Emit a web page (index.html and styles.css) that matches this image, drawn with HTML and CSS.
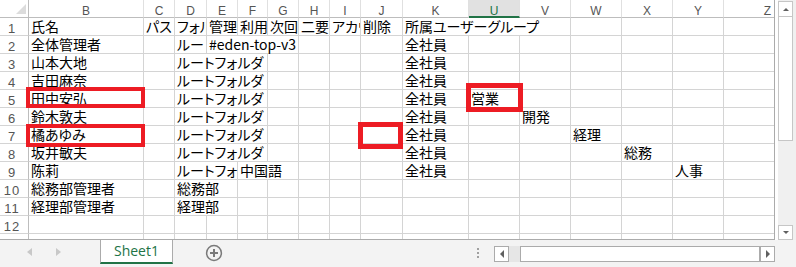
FILE: index.html
```html
<!DOCTYPE html>
<html lang="ja">
<head>
  <meta charset="UTF-8">
  <title>Sheet1</title>
  <link rel="stylesheet" href="styles.css">
</head>
<body>
<div class="app">
  <div class="top">
    <div class="sheet">
      <div class="grid">
        <div class="corner"><span class="tri-corner"></span></div>
        <div class="hd">B</div><div class="hd">C</div><div class="hd">D</div><div class="hd">E</div><div class="hd">F</div><div class="hd">G</div><div class="hd">H</div><div class="hd">I</div><div class="hd">J</div><div class="hd">K</div><div class="hd sel">U</div><div class="hd">V</div><div class="hd">W</div><div class="hd">X</div><div class="hd">Y</div><div class="hd last">Z</div>

        <div class="rn">1</div>
        <div class="c">氏名</div><div class="c">パス</div><div class="c clip">フォル</div><div class="c">管理</div><div class="c">利用</div><div class="c">次回</div><div class="c">二要</div><div class="c clip">アカウ</div><div class="c">削除</div><div class="c s3">所属ユーザーグループ</div><div class="c"></div><div class="c"></div><div class="c"></div><div class="c"></div>

        <div class="rn">2</div>
        <div class="c">全体管理者</div><div class="c"></div><div class="c">ルー</div><div class="c s3">#eden-top-v3</div><div class="c"></div><div class="c"></div><div class="c"></div><div class="c">全社員</div><div class="c"></div><div class="c"></div><div class="c"></div><div class="c"></div><div class="c"></div><div class="c"></div>

        <div class="rn">3</div>
        <div class="c">山本大地</div><div class="c"></div><div class="c s3">ルートフォルダ</div><div class="c"></div><div class="c"></div><div class="c"></div><div class="c"></div><div class="c">全社員</div><div class="c"></div><div class="c"></div><div class="c"></div><div class="c"></div><div class="c"></div><div class="c"></div>

        <div class="rn">4</div>
        <div class="c">吉田麻奈</div><div class="c"></div><div class="c s3">ルートフォルダ</div><div class="c"></div><div class="c"></div><div class="c"></div><div class="c"></div><div class="c">全社員</div><div class="c"></div><div class="c"></div><div class="c"></div><div class="c"></div><div class="c"></div><div class="c"></div>

        <div class="rn">5</div>
        <div class="c">田中安弘</div><div class="c"></div><div class="c s3">ルートフォルダ</div><div class="c"></div><div class="c"></div><div class="c"></div><div class="c"></div><div class="c">全社員</div><div class="c">営業</div><div class="c"></div><div class="c"></div><div class="c"></div><div class="c"></div><div class="c"></div>

        <div class="rn">6</div>
        <div class="c">鈴木敦夫</div><div class="c"></div><div class="c s3">ルートフォルダ</div><div class="c"></div><div class="c"></div><div class="c"></div><div class="c"></div><div class="c">全社員</div><div class="c"></div><div class="c">開発</div><div class="c"></div><div class="c"></div><div class="c"></div><div class="c"></div>

        <div class="rn">7</div>
        <div class="c">橘あゆみ</div><div class="c"></div><div class="c s3">ルートフォルダ</div><div class="c"></div><div class="c"></div><div class="c"></div><div class="c"></div><div class="c">全社員</div><div class="c"></div><div class="c"></div><div class="c">経理</div><div class="c"></div><div class="c"></div><div class="c"></div>

        <div class="rn">8</div>
        <div class="c">坂井敏夫</div><div class="c"></div><div class="c s3">ルートフォルダ</div><div class="c"></div><div class="c"></div><div class="c"></div><div class="c"></div><div class="c">全社員</div><div class="c"></div><div class="c"></div><div class="c"></div><div class="c">総務</div><div class="c"></div><div class="c"></div>

        <div class="rn">9</div>
        <div class="c">陈莉</div><div class="c"></div><div class="c s2">ルートフォ</div><div class="c s2">中国語</div><div class="c"></div><div class="c"></div><div class="c"></div><div class="c">全社員</div><div class="c"></div><div class="c"></div><div class="c"></div><div class="c"></div><div class="c">人事</div><div class="c"></div>

        <div class="rn">10</div>
        <div class="c">総務部管理者</div><div class="c"></div><div class="c s2">総務部</div><div class="c"></div><div class="c"></div><div class="c"></div><div class="c"></div><div class="c"></div><div class="c"></div><div class="c"></div><div class="c"></div><div class="c"></div><div class="c"></div><div class="c"></div><div class="c"></div>

        <div class="rn">11</div>
        <div class="c">経理部管理者</div><div class="c"></div><div class="c s2">経理部</div><div class="c"></div><div class="c"></div><div class="c"></div><div class="c"></div><div class="c"></div><div class="c"></div><div class="c"></div><div class="c"></div><div class="c"></div><div class="c"></div><div class="c"></div><div class="c"></div>

        <div class="rn">12</div>
        <div class="c"></div><div class="c"></div><div class="c"></div><div class="c"></div><div class="c"></div><div class="c"></div><div class="c"></div><div class="c"></div><div class="c"></div><div class="c"></div><div class="c"></div><div class="c"></div><div class="c"></div><div class="c"></div><div class="c"></div><div class="c"></div>

        <div class="rn"></div>
        <div class="c"></div><div class="c"></div><div class="c"></div><div class="c"></div><div class="c"></div><div class="c"></div><div class="c"></div><div class="c"></div><div class="c"></div><div class="c"></div><div class="c"></div><div class="c"></div><div class="c"></div><div class="c"></div><div class="c"></div><div class="c"></div>
      </div>

      <!-- highlight boxes drawn over the sheet -->
      <div class="mark m1"></div>
      <div class="mark m2"></div>
      <div class="mark m3"></div>
      <div class="mark m4"></div>
    </div>

    <div class="vscroll">
      <div class="vbtn up"><span class="arr-up"></span></div>
      <div class="vthumb"></div>
      <div class="vtrack"></div>
      <div class="vbtn down"><span class="arr-down"></span></div>
    </div>
  </div>

  <div class="bottom">
    <div class="nav"><span class="arr-left light"></span><span class="arr-right light"></span></div>
    <div class="tab">Sheet1</div>
    <div class="add">
      <svg width="18" height="18" viewBox="0 0 18 18">
        <circle cx="9" cy="9" r="7.4" fill="none" stroke="#7a7a7a" stroke-width="1.5"/>
        <path d="M5 9h8M9 5v8" stroke="#7a7a7a" stroke-width="2"/>
      </svg>
    </div>
    <div class="dots"><span></span><span></span><span></span></div>
    <div class="hscroll">
      <div class="hbtn"><span class="arr-left"></span></div>
      <div class="htrack"></div>
      <div class="hthumb"></div>
      <div class="hbtn"><span class="arr-right"></span></div>
    </div>
  </div>
</div>
</body>
</html>
```

FILE: styles.css
```css
body { margin: 0; background: #fff; font-family: "Noto Sans CJK JP", sans-serif; }
.app { width: 796px; height: 267px; overflow: hidden; }
.top { display: flex; height: 240px; }

/* sheet area */
.sheet { position: relative; width: 774px; height: 239px; overflow: hidden; border-right: 1px solid #ababab; border-bottom: 1px solid #ababab; }
.grid { display: grid; width: 775px; grid-template-columns: 29px 115px 31px 32px 31px 30px 31px 31px 31px 42px 66px repeat(6, 51px); grid-template-rows: repeat(13, 18px) 6px; }
.grid > div { box-sizing: border-box; border-right: 1px solid #d4d4d4; border-bottom: 1px solid #d4d4d4; white-space: nowrap; }
.grid .c { font-size: 14px; line-height: 17px; padding-left: 2px; color: #000; font-feature-settings: "palt"; }
.grid .clip { overflow: hidden; }
.grid .s2 { grid-column: span 2; }
.grid .s3 { grid-column: span 3; }

.grid .hd { font-family: "Liberation Sans", sans-serif; font-size: 12px; line-height: 11px; padding-top: 6px; text-align: center; color: #555; border-right-color: #e0e0e0; border-bottom-color: #bdbdbd; }
.grid .hd.sel { background: #e1e1e1; color: #217346; border-bottom: 2px solid #217346; }
.grid .hd.last { text-align: right; padding-right: 3px; }
.grid .rn { font-family: "Liberation Sans", sans-serif; font-size: 13px; line-height: 12px; padding: 5px 4px 0 0; letter-spacing: 1px; text-align: center; color: #555; border-right-color: #bdbdbd; }
.grid .corner { display: flex; justify-content: flex-end; align-items: flex-end; padding: 0 2px 3px 0; border-right-color: #bdbdbd; border-bottom-color: #bdbdbd; }
.tri-corner { width: 0; height: 0; border-left: 10px solid transparent; border-bottom: 10px solid #dcdcdc; }

.mark { position: absolute; box-sizing: border-box; border: 4px solid #ed1c24; }
.m1 { left: 26px; top: 87px; width: 119px; height: 21px; }
.m2 { left: 26px; top: 124px; width: 119px; height: 23px; }
.m3 { left: 358px; top: 122px; width: 45px; height: 27px; border-width: 5px; }
.m4 { left: 466px; top: 83px; width: 57px; height: 29px; border-width: 5px; }

/* vertical scrollbar */
.vscroll { box-sizing: border-box; width: 21px; height: 240px; padding-top: 1px; background: #f0f0f0; border-left: 3px solid #fff; display: flex; flex-direction: column; }
.vbtn { box-sizing: border-box; width: 15px; background: #fff; border: 1px solid #c6c6c6; display: flex; align-items: center; justify-content: center; }
.vbtn.up { height: 16px; }
.vbtn.down { height: 15px; }
.vthumb { box-sizing: border-box; width: 15px; height: 124px; background: #fff; border: 1px solid #c6c6c6; border-top: 0; }
.vtrack { flex: 1; }
.arr-up { width: 0; height: 0; border-left: 3px solid transparent; border-right: 3px solid transparent; border-bottom: 3px solid #606060; }
.arr-down { width: 0; height: 0; border-left: 3px solid transparent; border-right: 3px solid transparent; border-top: 3px solid #606060; }

/* sheet tabs and horizontal scrollbar */
.bottom { display: flex; align-items: flex-start; height: 27px; background: #f3f3f3; }
.nav { width: 100px; height: 23px; display: flex; align-items: center; gap: 24px; padding-left: 27px; box-sizing: border-box; }
.arr-left { width: 0; height: 0; border-top: 4px solid transparent; border-bottom: 4px solid transparent; border-right: 4px solid #606060; }
.arr-right { width: 0; height: 0; border-top: 4px solid transparent; border-bottom: 4px solid transparent; border-left: 4px solid #606060; }
.arr-left.light { border-right: 5px solid #c8c8c8; }
.arr-right.light { border-left: 5px solid #c8c8c8; }
.tab { box-sizing: border-box; width: 73px; height: 24px; background: #fff; border-left: 1px solid #ababab; border-right: 1px solid #ababab; border-bottom: 2px solid #217346; font-family: "Open Sans", sans-serif; font-size: 14px; line-height: 22px; text-align: center; color: #217346; }
.add { margin: 4px 0 0 32px; width: 18px; height: 18px; }
.add svg { display: block; }
.dots { margin: 8px 0 0 254px; width: 2px; display: flex; flex-direction: column; gap: 2px; }
.dots span { width: 2px; height: 2px; background: #a0a0a0; }
.hscroll { display: flex; margin: 6px 0 0 15px; height: 16px; }
.hbtn { box-sizing: border-box; width: 15px; height: 16px; background: #fff; border: 1px solid #ababab; display: flex; align-items: center; justify-content: center; }
.htrack { width: 11px; background: #e6e6e6; }
.hthumb { box-sizing: border-box; width: 240px; background: #fff; border: 1px solid #ababab; }
```
